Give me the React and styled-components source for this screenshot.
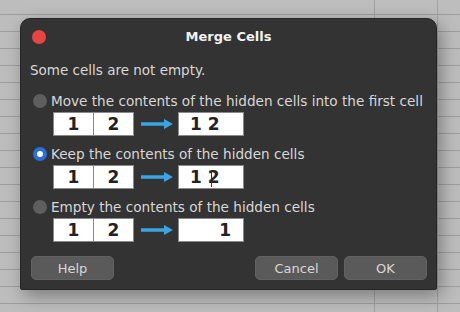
import React from 'react'
import styled, { createGlobalStyle } from 'styled-components'

const GlobalStyle = createGlobalStyle`
  html, body {
    margin: 0;
    padding: 0;
  }
  body {
    width: 460px;
    height: 312px;
    overflow: hidden;
    font-family: "DejaVu Sans", "Liberation Sans", sans-serif;
    background-color: #bdbdbd;
    background-image:
      linear-gradient(to right, transparent 374px, #a2a2a2 374px, #a2a2a2 375px, transparent 375px),
      linear-gradient(to right, transparent 437px, #a2a2a2 437px, #a2a2a2 438px, transparent 438px),
      repeating-linear-gradient(to bottom, transparent 0, transparent 15px, #9e9e9e 15px, #9e9e9e 16px, transparent 16px, transparent 17px);
    background-position: 0 0, 0 0, 0 -1px;
  }
`

const options = [
  { label: 'Move the contents of the hidden cells into the first cell', result: 'join' },
  { label: 'Keep the contents of the hidden cells', result: 'keep', checked: true },
  { label: 'Empty the contents of the hidden cells', result: 'empty' },
]

const App = () => {
  return (
    <>
      <GlobalStyle />
      <Dialog>
        <TitleBar>
          <CloseDot />
          <Title>Merge Cells</Title>
          <span />
        </TitleBar>
        <Message>Some cells are not empty.</Message>
        <Options>
          {options.map((o) => (
            <Option key={o.result}>
              <RadioRow>
                <Radio $checked={o.checked} />
                <span>{o.label}</span>
              </RadioRow>
              <CellRow>
                <SourceBox>
                  <Cell>1</Cell>
                  <Cell $divider>2</Cell>
                </SourceBox>
                <Arrow width="34" height="12" viewBox="0 0 34 12">
                  <path d="M1 6 H25" stroke="#3ba5e4" strokeWidth="3.5" />
                  <path d="M24 1 L33 6 L24 11 Z" fill="#3ba5e4" />
                </Arrow>
                <ResultBox $align={o.result === 'empty' ? 'right' : 'left'}>
                  {o.result === 'empty' ? '1' : '1 2'}
                  {o.result === 'keep' && <Caret />}
                </ResultBox>
              </CellRow>
            </Option>
          ))}
        </Options>
        <Buttons>
          <Button>Help</Button>
          <Spacer />
          <Button>Cancel</Button>
          <Button>OK</Button>
        </Buttons>
      </Dialog>
    </>
  )
}

export default App

const Dialog = styled.div`
  margin: 18px 0 0 20px;
  width: 417px;
  height: 272px;
  box-sizing: border-box;
  background: #333333;
  border: 1px solid #262626;
  border-radius: 10px 10px 2px 2px;
  box-shadow: 4px 6px 18px rgba(0, 0, 0, 0.35);
  display: flex;
  flex-direction: column;
  padding: 0 9px;
`

const TitleBar = styled.div`
  height: 35px;
  display: grid;
  grid-template-columns: 1fr auto 1fr;
  align-items: center;
`

const CloseDot = styled.span`
  width: 14px;
  height: 14px;
  border-radius: 50%;
  background: #e6463f;
  margin-left: 2px;
`

const Title = styled.div`
  color: #f2f2f2;
  font-weight: bold;
  font-size: 13px;
`

const Message = styled.div`
  margin-top: 7px;
  height: 18px;
  line-height: 18px;
  font-size: 13.5px;
  color: #d8d8d8;
`

const Options = styled.div`
  margin-top: 13px;
  display: flex;
  flex-direction: column;
  gap: 9px;
`

const Option = styled.div`
  display: flex;
  flex-direction: column;
  gap: 2px;
`

const RadioRow = styled.div`
  height: 18px;
  display: flex;
  align-items: center;
  gap: 4px;
  font-size: 13.6px;
  color: #d8d8d8;
  padding-left: 3px;
  white-space: nowrap;
`

const Radio = styled.span`
  flex: none;
  width: 14px;
  height: 14px;
  border-radius: 50%;
  box-sizing: border-box;
  background: ${(p) => (p.$checked ? '#fff' : '#5e5e5e')};
  border: ${(p) => (p.$checked ? '4px solid #2b6fd8' : 'none')};
`

const CellRow = styled.div`
  height: 24px;
  display: flex;
  align-items: center;
  padding-left: 23px;
`

const SourceBox = styled.div`
  display: flex;
  height: 24px;
  border: 1px solid #8a8a8a;
  box-sizing: border-box;
  background: #fff;
`

const Cell = styled.div`
  width: 39px;
  height: 22px;
  line-height: 22px;
  text-align: center;
  font-family: "DejaVu Sans", sans-serif;
  font-weight: bold;
  font-size: 17px;
  color: #222;
  border-left: ${(p) => (p.$divider ? '1px solid #8a8a8a' : 'none')};
`

const Arrow = styled.svg`
  margin: 0 4px 0 6px;
  display: block;
`

const ResultBox = styled.div`
  position: relative;
  width: 66px;
  height: 24px;
  box-sizing: border-box;
  border: 1px solid #8a8a8a;
  background: #fff;
  line-height: 22px;
  font-family: "DejaVu Sans", sans-serif;
  font-weight: bold;
  font-size: 17px;
  color: #222;
  white-space: pre;
  text-align: ${(p) => p.$align};
  padding: ${(p) => (p.$align === 'right' ? '0 12px 0 0' : '0 0 0 11px')};
`

const Caret = styled.span`
  position: absolute;
  left: 32px;
  top: 4px;
  width: 1px;
  height: 17px;
  background: #333;
`

const Buttons = styled.div`
  margin-top: 14px;
  display: flex;
  gap: 6px;
  padding: 0 0 0 1px;
`

const Spacer = styled.div`
  flex: 1;
`

const Button = styled.button`
  width: 83px;
  height: 24px;
  border: 1px solid #626262;
  border-radius: 5px;
  background: #5a5a5a;
  color: #d8d8d8;
  font-family: "DejaVu Sans", sans-serif;
  font-size: 13px;
  padding: 0;
`
